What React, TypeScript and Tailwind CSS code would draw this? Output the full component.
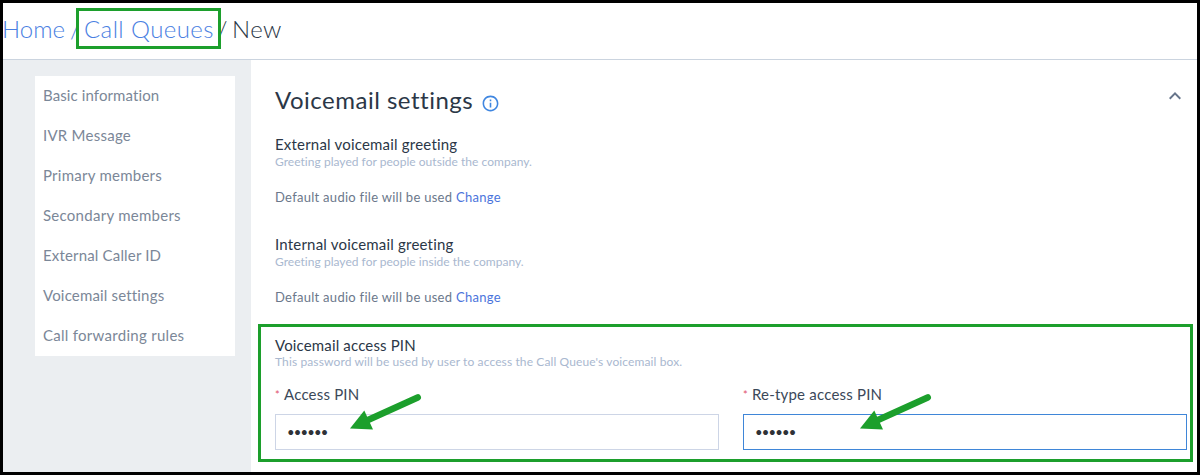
import React from 'react';
import { MdInfoOutline, MdKeyboardArrowUp } from 'react-icons/md';

const NAV_ITEMS = [
  { label: 'Basic information', tracking: 'tracking-[0.1px]' },
  { label: 'IVR Message', tracking: 'tracking-[0.25px]' },
  { label: 'Primary members', tracking: 'tracking-[0.25px]' },
  { label: 'Secondary members', tracking: 'tracking-[0.27px]' },
  { label: 'External Caller ID', tracking: 'tracking-[0.17px]' },
  { label: 'Voicemail settings', tracking: 'tracking-[0.17px]' },
  { label: 'Call forwarding rules', tracking: 'tracking-[0.28px]' },
];

const GREETINGS = [
  { title: 'External voicemail greeting', hint: 'Greeting played for people outside the company.' },
  { title: 'Internal voicemail greeting', hint: 'Greeting played for people inside the company.' },
];

const Arrow: React.FC<{ position: string }> = ({ position }) => (
  <svg
    className={`pointer-events-none absolute -top-[21px] ${position}`}
    width="74"
    height="38"
    viewBox="0 0 74 38"
    fill="none"
  >
    <path d="M68.7 4.4L19 27" stroke="#1c9f2c" strokeWidth="6.6" strokeLinecap="round" />
    <path d="M1 35.6L15.3 17.6L24 36.4Z" fill="#1c9f2c" />
  </svg>
);

const PinField: React.FC<{ label: string; border: string; arrow: string }> = ({ label, border, arrow }) => (
  <div className="flex-1">
    <label className="flex h-5 text-[15px] leading-5 tracking-[0.2px] text-[#3b4859]">
      <span className="w-[9px] pt-px text-[11px] tracking-normal text-[#e0506a]">*</span>
      {label}
    </label>
    <div className="relative mt-[10px]">
      <input
        type="password"
        defaultValue="123456"
        className={`block h-9 w-full border bg-white px-[11px] text-[13px] tracking-[-0.8px] text-[#2f3237] outline-none ${border}`}
      />
      <Arrow position={arrow} />
    </div>
  </div>
);

export default function App() {
  return (
    <div className="flex h-[475px] w-[1200px] flex-col overflow-hidden border-[3px] border-black bg-white font-['Lato',sans-serif]">
      <header className="flex h-[57px] shrink-0 items-start border-b border-[#cbd4df] pt-[5px] text-[24px] font-light text-[#2b3747]">
        <div className="-ml-px flex h-[41px] w-[74px] items-center whitespace-nowrap text-[#4a80e2]">
          <span className="w-[68px] shrink-0">Home</span>
          <span>/</span>
        </div>
        <div className="relative z-10 flex h-[41px] w-[145px] items-center border-[3px] border-[#1c9f2c] bg-white pl-[5px] tracking-[0.4px] whitespace-nowrap text-[#4a80e2]">
          Call Queues
        </div>
        <div className="flex h-[41px] items-center">
          <span className="-ml-[4px] w-[15px]">/</span>
          <span className="tracking-[0.4px]">New</span>
        </div>
      </header>

      <div className="flex flex-1">
        <aside className="w-[248px] shrink-0 bg-[#ebeef1] pt-4 pl-8">
          <nav className="w-[200px] bg-white">
            {NAV_ITEMS.map((item) => (
              <a key={item.label} className={`flex h-10 items-center pb-0.5 pl-2 text-[15px] text-[#7b8798] ${item.tracking}`}>
                {item.label}
              </a>
            ))}
          </nav>
        </aside>

        <main className="flex-1 pt-6">
          <div className="flex h-[50px] items-start justify-between pr-[10px] pl-6">
            <div className="flex h-8 items-center">
              <h1 className="text-[24px] tracking-[0.5px] text-[#2b3747]">Voicemail settings</h1>
              <MdInfoOutline size={19} className="mt-[7px] ml-[7.5px] text-[#3f86e0]" />
            </div>
            <MdKeyboardArrowUp size={24} className="text-[#66748a]" />
          </div>

          {GREETINGS.map((greeting) => (
            <section key={greeting.title} className="h-[100px] pl-6">
              <h2 className="text-[15px] leading-5 tracking-[0.2px] text-[#2b3747]">{greeting.title}</h2>
              <p className="mt-0.5 text-[12px] leading-3 tracking-[0.03px] text-[#a9b8cf]">{greeting.hint}</p>
              <p className="mt-[19px] text-[13px] leading-5 tracking-[0.28px] text-[#6b788b]">
                Default audio file will be used <a className="text-[#4a74dc]">Change</a>
              </p>
            </section>
          ))}

          <section className="mt-[-10px] mr-1 ml-[7px] h-[138px] border-[3px] border-[#1c9f2c] pt-2 pr-[3px] pl-[14px]">
            <h2 className="text-[15px] leading-5 tracking-[0.15px] text-[#2b3747]">Voicemail access PIN</h2>
            <p className="mt-px text-[12px] leading-3 tracking-[0.12px] text-[#a9b8cf]">
              This password will be used by user to access the Call Queue's voicemail box.
            </p>
            <div className="mt-4 flex gap-6">
              <PinField label="Access PIN" border="border-[#cdd5e6]" arrow="left-[74px]" />
              <PinField label="Re-type access PIN" border="border-[#3f86d8]" arrow="left-[116px]" />
            </div>
          </section>
        </main>
      </div>
    </div>
  );
}
